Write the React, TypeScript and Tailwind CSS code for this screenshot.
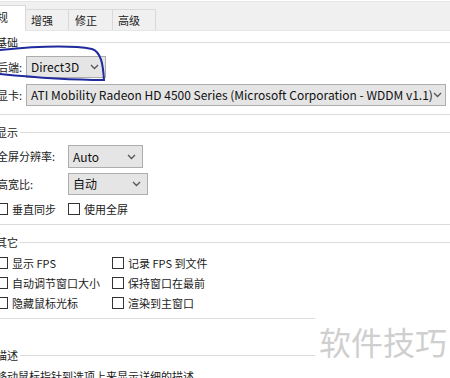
import { ReactNode } from "react";

function Chevron() {
  return (
    <svg width="9" height="6" viewBox="0 0 9 6" className="shrink-0">
      <path d="M1 1l3.5 3.5L8 1" stroke="#555" strokeWidth="1.3" fill="none" />
    </svg>
  );
}

function Select({ text, className }: { text: string; className: string }) {
  return (
    <div className={`flex items-center justify-between pl-[4px] pr-[6px] bg-[#e5e5e5] border border-[#adadad] text-[12px] text-[#111] ${className}`}>
      <span className="whitespace-nowrap">{text}</span>
      <Chevron />
    </div>
  );
}

function Check({ label, className = "" }: { label: string; className?: string }) {
  return (
    <div className={`flex items-center gap-[4px] ${className}`}>
      <span className="w-[12px] h-[12px] border border-[#333] bg-white shrink-0" />
      <span className="whitespace-nowrap">{label}</span>
    </div>
  );
}

function Header({ title, className = "" }: { title: string; className?: string }) {
  return (
    <div className={`flex items-center h-[14px] -ml-[1px] ${className}`}>
      <span className="whitespace-nowrap">{title}</span>
      <div className="flex-1 h-px bg-[#dcdcdc] ml-[2px]" />
    </div>
  );
}

function Group({ children, className = "" }: { children: ReactNode; className?: string }) {
  return <div className={`border-b border-[#dcdcdc] ${className}`}>{children}</div>;
}

export default function App() {
  return (
    <div className="relative w-[450px] h-[378px] overflow-hidden bg-white text-[11px] text-[#1a1a1a] font-['Noto_Sans_CJK_SC',sans-serif]">
      {/* Tabs */}
      <div className="flex items-end h-[30px] mt-[1px] bg-[#f0f0f0] border-t border-[#e6e6e6] border-b border-[#d9d9d9]">
        <div className="-ml-[20px] w-[46px] h-[26px] -mb-px pl-[5px] pt-[3px] bg-white border-x border-t border-[#d9d9d9]">常规</div>
        <div className="w-[43px] h-[21px] pl-[5px] pt-[2px] bg-[#f0f0f0] border-r border-t border-[#d9d9d9]">增强</div>
        <div className="w-[44px] h-[21px] pl-[6px] pt-[2px] bg-[#f0f0f0] border-r border-t border-[#d9d9d9]">修正</div>
        <div className="w-[43px] h-[21px] pl-[5px] pt-[2px] bg-[#f0f0f0] border-r border-t border-[#d9d9d9]">高级</div>
      </div>

      <div className="-ml-[3px] w-[470px]">
        {/* Basic */}
        <Group className="pb-[8px]">
          <Header title="基础" className="mt-[4px]" />
          <div className="flex items-center mt-[7px]">
            <span className="w-[29px]">后端:</span>
            <Select text="Direct3D" className="w-[80px] h-[22px]" />
          </div>
          <div className="flex items-center mt-[6px]">
            <span className="w-[29px]">显卡:</span>
            <Select text="ATI Mobility Radeon HD 4500 Series (Microsoft Corporation - WDDM v1.1)" className="w-[420px] h-[22px]" />
          </div>
        </Group>

        {/* Display */}
        <Group className="pb-[8px]">
          <Header title="显示" className="mt-[10px]" />
          <div className="flex items-center mt-[6px]">
            <span className="w-[71px]">全屏分辨率:</span>
            <Select text="Auto" className="w-[75px] h-[23px]" />
          </div>
          <div className="flex items-center mt-[5px]">
            <span className="w-[71px]">高宽比:</span>
            <Select text="自动" className="w-[80px] h-[22px]" />
          </div>
          <div className="flex items-center h-[14px] mt-[7px] -ml-[1px]">
            <Check label="垂直同步" className="w-[72px]" />
            <Check label="使用全屏" />
          </div>
        </Group>

        {/* Other */}
        <Group className="pb-[5px]">
          <Header title="其它" className="mt-[10px]" />
          <div className="flex flex-col mt-[4px] -ml-[1px]">
            <div className="flex items-center h-[20px]">
              <Check label="显示 FPS" className="w-[116px]" />
              <Check label="记录 FPS 到文件" />
            </div>
            <div className="flex items-center h-[20px]">
              <Check label="自动调节窗口大小" className="w-[116px]" />
              <Check label="保持窗口在最前" />
            </div>
            <div className="flex items-center h-[20px]">
              <Check label="隐藏鼠标光标" className="w-[116px]" />
              <Check label="渲染到主窗口" />
            </div>
          </div>
        </Group>

        {/* Description */}
        <Header title="描述" className="mt-[29px]" />
        <div className="mt-[6px] -ml-[1px] whitespace-nowrap">移动鼠标指针到选项上来显示详细的描述。</div>
      </div>

      {/* Hand drawn mark */}
      <svg className="absolute left-0 top-0 pointer-events-none" width="120" height="90" viewBox="0 0 120 90">
        <path d="M0 50 C 30 47, 70 45, 92 49 C 101 52, 103 64, 104 80 C 80 80, 40 78, 0 74" stroke="#1f2a9e" strokeWidth="2" fill="none" strokeLinecap="round" />
      </svg>

      {/* Watermark */}
      <div className="absolute left-[315px] top-[316px] right-0 bottom-0 bg-white flex items-start pl-[4px] pt-[9px]">
        <span className="text-[32px] leading-none text-[#cfcfcf] whitespace-nowrap">软件技巧</span>
      </div>
    </div>
  );
}
